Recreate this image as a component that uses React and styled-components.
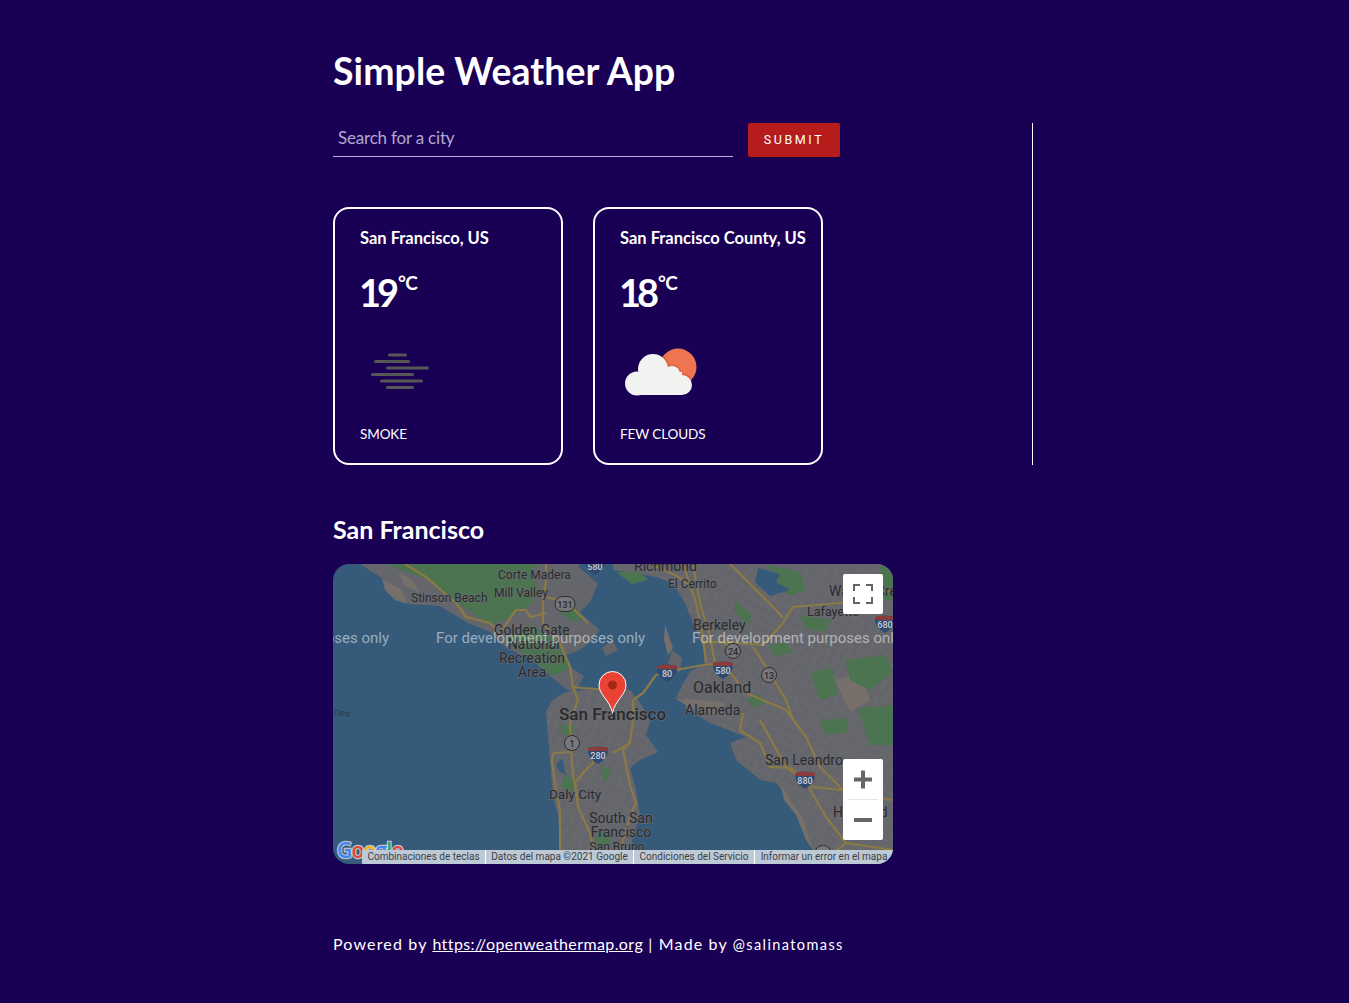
import React from 'react';
import styled, { createGlobalStyle } from 'styled-components';

const GlobalStyle = createGlobalStyle`
   html, body {
      margin: 0;
      padding: 0;
      background: #1a0055;
   }
   body {
      color: #fff;
      font-family: 'Lato', 'Open Sans', sans-serif;
   }
`;

const Page = styled.div`
   box-sizing: border-box;
   height: 1003px;
   overflow: hidden;
   padding: 47px 0 0 333px;
`;

const Title = styled.h1`
   margin: 0 0 28px;
   height: 48px;
   font-size: 37.4px;
   line-height: 48px;
   font-weight: 700;
   letter-spacing: 0.1px;
`;

const Search = styled.section`
   box-sizing: border-box;
   width: 700px;
   height: 342px;
   border-right: 1px solid #fff;
`;

const Form = styled.form`
   display: flex;
   align-items: flex-start;
   gap: 15px;
   margin-bottom: 50px;
`;

const CityInput = styled.input`
   box-sizing: border-box;
   width: 400px;
   height: 34px;
   padding: 0 5px 4px;
   background: transparent;
   border: 0;
   border-bottom: 1px solid #b9b2d2;
   outline: none;
   color: #fff;
   font-family: inherit;
   font-size: 17px;
   letter-spacing: -0.2px;

   &::placeholder {
      color: #b3a9d0;
      opacity: 1;
   }
`;

const Submit = styled.button`
   width: 92px;
   height: 34px;
   padding: 0 0 2px;
   background: #b71c1c;
   border: 0;
   border-radius: 2px;
   color: #fff;
   font-family: 'Roboto', sans-serif;
   font-size: 12.5px;
   font-weight: 400;
   letter-spacing: 2.6px;
   box-shadow: 0 1px 2px rgba(0, 0, 0, 0.3);
`;

const Cards = styled.div`
   display: flex;
   gap: 30px;
`;

const Card = styled.article`
   box-sizing: border-box;
   width: 230px;
   height: 258px;
   padding: 19px 0 0 25px;
   border: 2px solid #fff;
   border-radius: 16px;
`;

const City = styled.h3`
   margin: 0;
   height: 20px;
   font-size: 16.5px;
   line-height: 20px;
   font-weight: 700;
   white-space: nowrap;
`;

const Temperature = styled.div`
   display: flex;
   align-items: flex-start;
   height: 38px;
   margin: 25px 0 21px -1px;
   font-size: 38px;
   line-height: 38px;
   font-weight: 700;
   letter-spacing: -4px;
`;

const Unit = styled.span`
   margin-left: 3px;
   font-size: 19px;
   line-height: 20px;
   font-weight: 700;
   letter-spacing: -0.8px;
`;

const WeatherIcon = styled.svg`
   display: block;
   width: 80px;
   height: 80px;
`;

const Description = styled.p`
   margin: 13px 0 0;
   font-size: 13.5px;
   line-height: 18px;
   letter-spacing: -0.1px;
`;

const CityHeading = styled.h2`
   margin: 49px 0 20px;
   height: 30px;
   font-size: 25px;
   line-height: 30px;
   font-weight: 700;
`;

const MapFrame = styled.div`
   position: relative;
   width: 560px;
   height: 300px;
   border-radius: 16px;
   overflow: hidden;
`;

const MapDrawing = styled.svg`
   display: block;
   width: 560px;
   height: 300px;
   background: #355a7a;
`;

const Land = styled.path`
   fill: ${({ $tan }) => ($tan ? '#77706a' : '#65666b')};
`;

const Park = styled.path`
   fill: #4c7450;
`;

const Water = styled.path`
   fill: #355a7a;
`;

const Road = styled.polyline`
   fill: none;
   stroke: #8b7a45;
   stroke-width: 2.2px;
   stroke-linejoin: round;
`;

const Place = styled.text`
   font-family: 'Roboto', sans-serif;
   font-size: ${({ $size }) => $size}px;
   font-weight: ${({ $weight }) => $weight || 400};
   fill: #29292e;
   stroke: #6d6e72;
   stroke-width: 1.6px;
   stroke-opacity: 0.7;
   paint-order: stroke;
   text-anchor: ${({ $middle }) => ($middle ? 'middle' : 'start')};
`;

const Watermark = styled.text`
   font-family: 'Roboto', sans-serif;
   font-size: 15px;
   fill: rgba(255, 255, 255, 0.5);
`;

const ShieldLabel = styled.text`
   font-family: 'Roboto', sans-serif;
   font-size: ${({ $size }) => $size || 9}px;
   font-weight: 500;
   text-anchor: middle;
   fill: ${({ $dark }) => ($dark ? '#2a2a2e' : '#c9ced6')};
`;

const LogoLetter = styled.tspan`
   fill: ${({ $color }) => $color};
`;

const Logo = styled.text`
   font-family: 'Open Sans', sans-serif;
   font-size: 21px;
   font-weight: 600;
   letter-spacing: -0.8px;
   stroke: rgba(255, 255, 255, 0.65);
   stroke-width: 2.5px;
   paint-order: stroke;
`;

const MapButton = styled.div`
   position: absolute;
   right: 10px;
   top: ${({ $top }) => $top}px;
   width: 40px;
   height: ${({ $tall }) => ($tall ? 81 : 40)}px;
   background: #fff;
   border-radius: 2px;
`;

const ButtonIcon = styled.svg`
   display: block;
   width: 40px;
   height: ${({ $tall }) => ($tall ? 81 : 40)}px;
`;

const Attribution = styled.div`
   position: absolute;
   right: 0;
   bottom: 0;
   display: flex;
   height: 14px;
   background: #bdc9d5;
   font-family: 'Roboto', sans-serif;
   font-size: 10px;
   line-height: 14px;
   color: #3c4046;
`;

const AttributionItem = styled.span`
   box-sizing: border-box;
   width: ${({ $width }) => $width}px;
   text-align: center;
   white-space: nowrap;
   & + & {
      border-left: 1px solid #fff;
   }
`;

const Footer = styled.footer`
   margin-top: 69px;
   font-size: 16px;
   line-height: 22px;
   letter-spacing: 1.15px;
   white-space: nowrap;
`;

const FooterLink = styled.a`
   color: #fff;
   text-decoration: underline;
   letter-spacing: 0.4px;
`;

const Handle = styled.span`
   font-size: 14.5px;
   letter-spacing: 1.4px;
`;

const LAND = [
   'M360 564 L382 578 L402 590 L408 604 L440 606 L466 622 L490 632 L506 648 L532 660 L552 678 L568 690 L574 694 L584 676 L572 668 L566 655 L580 650 L590 642 L600 630 L590 622 L580 612 L590 602 L598 584 L578 566 L582 564 Z',
   'M546 712 L552 700 L566 692 L584 690 L610 686 L630 690 L640 702 L650 722 L646 735 L658 752 L640 760 L630 768 L636 790 L640 815 L632 840 L625 864 L560 864 L560 840 L558 815 L553 797 L550 760 Z',
   'M613 564 L613 570 L640 574 L656 577 L673 583 L685 603 L693 623 L703 647 L705 663 L690 672 L676 697 L690 700 L685 708 L710 723 L746 737 L730 743 L736 760 L760 780 L776 783 L790 800 L803 817 L813 850 L820 864 L893 864 L893 564 Z',
];

const TAN = [
   'M382 578 L402 590 L408 604 L395 600 L385 590 Z',
   'M398 572 L412 580 L420 592 L405 586 Z',
   'M780 783 L790 800 L803 817 L813 850 L806 840 L796 815 L784 800 Z',
   'M835 680 L860 672 L870 700 L850 712 Z',
   'M665 625 L673 648 L668 655 L664 640 Z',
];

const PARKS = [
   'M385 564 L430 580 L462 606 L490 625 L510 618 L530 605 L540 590 L530 575 L540 564 Z',
   'M504 640 L530 625 L556 640 L570 668 L552 676 L530 658 Z',
   'M556 608 L575 608 L584 618 L575 622 L562 615 Z',
   'M616 572 L640 572 L648 580 L632 584 Z',
   'M880 566 L893 566 L893 600 L884 600 Z',
   'M800 615 L830 620 L826 632 L805 628 Z',
   'M768 565 L800 572 L806 590 L790 596 L776 585 Z',
   'M768 645 L785 642 L792 652 L775 656 Z',
   'M735 600 L752 615 L748 625 L735 612 Z',
   'M845 660 L885 655 L893 672 L870 690 L850 680 Z',
   'M810 672 L832 668 L838 695 L820 700 Z',
   'M820 720 L846 718 L848 732 L825 735 Z',
   'M858 708 L893 705 L893 745 L870 745 Z',
   'M845 770 L870 760 L880 790 L855 800 Z',
   'M560 725 L575 725 L572 735 L562 734 Z',
   'M565 775 L576 782 L570 796 L561 786 Z',
   'M600 765 L612 772 L605 783 Z',
   'M746 700 L760 694 L766 702 L755 708 Z',
   'M595 835 L605 830 L612 845 L598 850 Z',
];

const HIGHWAYS = [
   '405,564 426,577 456,603 466,617 490,623 500,633',
   '500,633 516,610 526,610 530,617 546,613',
   '546,564 546,580 543,603 543,623 560,643 570,667 573,687 583,688 612,690',
   '546,597 566,602 588,623',
   '573,687 578,700 570,723 571,750 573,775 578,800',
   '553,753 571,752',
   '553,753 552,762 556,790 560,810 560,850',
   '593,750 593,763 583,773 575,783 578,807 590,833 597,864',
   '633,700 633,720 630,743 623,750 630,785 636,803 630,817 620,850',
   '633,700 643,693 656,675 676,670 703,665 723,663',
   '613,753 630,743',
   '683,564 696,603 703,637 706,663',
   '693,564 700,603 710,637 715,663',
   '723,642 763,645 783,623 793,607 840,603 880,593 893,590',
   '703,642 723,642 735,650',
   '753,647 770,673 786,700 793,720',
   '726,667 746,693 786,710 806,737 820,767 846,793 893,800',
   '743,713 740,730 760,743 770,767 790,768 803,777 826,817 846,843 893,850',
   '760,720 786,767 813,787 843,790',
   '730,564 746,580 776,610 783,618',
   '820,864 846,843',
   '650,564 675,575 690,585',
];

const PLACES = [
   { x: 634, y: 571, size: 14, text: 'Richmond' },
   { x: 498, y: 579, size: 12, text: 'Corte Madera' },
   { x: 668, y: 588, size: 12, text: 'El Cerrito' },
   { x: 411, y: 602, size: 12, text: 'Stinson Beach' },
   { x: 494, y: 597, size: 12, text: 'Mill Valley' },
   { x: 494, y: 635, size: 13.8, text: 'Golden Gate' },
   { x: 508, y: 649, size: 13.8, text: 'National' },
   { x: 499, y: 663, size: 13.8, text: 'Recreation' },
   { x: 518, y: 677, size: 13.8, text: 'Area' },
   { x: 693, y: 630, size: 14, text: 'Berkeley' },
   { x: 693, y: 693, size: 16, text: 'Oakland' },
   { x: 685, y: 715, size: 14, text: 'Alameda' },
   { x: 559, y: 720, size: 17, weight: 500, text: 'San Francisco' },
   { x: 549, y: 799, size: 13.5, text: 'Daly City' },
   { x: 621, y: 823, size: 14, middle: true, text: 'South San' },
   { x: 621, y: 837, size: 14, middle: true, text: 'Francisco' },
   { x: 617, y: 851, size: 12, middle: true, text: 'San Bruno' },
   { x: 765, y: 765, size: 14, text: 'San Leandro' },
   { x: 807, y: 616, size: 12.5, text: 'Lafayette' },
   { x: 829, y: 596, size: 14, text: 'Walnut Creek' },
   { x: 833, y: 817, size: 14, text: 'Hayward' },
];

const INTERSTATES = [
   { x: 595, y: 566, text: '580' },
   { x: 667, y: 673, text: '80' },
   { x: 723, y: 670, text: '580' },
   { x: 598, y: 755, text: '280' },
   { x: 805, y: 780, text: '880' },
   { x: 885, y: 624, text: '680' },
];

const ROUTES = [
   { x: 565, y: 604, w: 20, text: '131' },
   { x: 733, y: 651, w: 15, text: '24' },
   { x: 769, y: 675, w: 15, text: '13' },
   { x: 572, y: 743, w: 15, text: '1' },
   { x: 823, y: 853, w: 16, text: '92' },
];

const Interstate = ({ x, y, text }) => (
   <g transform={`translate(${x} ${y})`}>
      <path d='M-10 -7 Q0 -10 10 -7 Q11 3 0 9 Q-11 3 -10 -7 Z' fill='#2f4a6e' />
      <path d='M-10 -7 Q0 -10 10 -7 L10 -4 L-10 -4 Z' fill='#8c3b3b' />
      <ShieldLabel x={0} y={4}>
         {text}
      </ShieldLabel>
   </g>
);

const Route = ({ x, y, w, text }) => (
   <g>
      <rect
         x={x - w / 2}
         y={y - 7.5}
         width={w}
         height={15}
         rx={7.5}
         fill='#77787c'
         stroke='#2c2c30'
      />
      <ShieldLabel $dark x={x} y={y + 3.5}>
         {text}
      </ShieldLabel>
   </g>
);

const CityMap = () => (
   <MapFrame>
      <MapDrawing viewBox='333 564 560 300'>
         <defs>
            <pattern
               id='streets'
               width='9'
               height='9'
               patternUnits='userSpaceOnUse'
               patternTransform='rotate(25)'
            >
               <path d='M0 0H9M0 0V9' stroke='#737478' strokeWidth='0.6' />
            </pattern>
         </defs>

         {LAND.map((d) => (
            <Land key={d} d={d} />
         ))}
         {LAND.slice(1).map((d) => (
            <path key={d} d={d} fill='url(#streets)' />
         ))}
         {TAN.map((d) => (
            <Land key={d} d={d} $tan />
         ))}
         {PARKS.map((d) => (
            <Park key={d} d={d} />
         ))}
         <Land d='M672 650 L682 658 L680 672 L668 664 Z' />
         <Land d='M675 698 L725 702 L722 716 L690 708 Z' $tan />
         <Land d='M602 648 L612 640 L618 650 L606 656 Z' />
         <Water d='M758 568 L780 574 L776 582 L790 590 L770 596 L755 582 Z' />
         <Water d='M556 765 L562 758 L566 775 L560 772 Z' />

         {HIGHWAYS.map((points) => (
            <Road key={points} points={points} />
         ))}

         {INTERSTATES.map((shield) => (
            <Interstate key={shield.text + shield.x} {...shield} />
         ))}
         {ROUTES.map((shield) => (
            <Route key={shield.text} {...shield} />
         ))}

         {PLACES.map(({ x, y, size, weight, middle, text }) => (
            <Place key={text} x={x} y={y} $size={size} $weight={weight} $middle={middle}>
               {text}
            </Place>
         ))}
         <ShieldLabel $dark $size={10} x={342} y={716} transform='rotate(10 342 716)' opacity='0.5'>
            nes
         </ShieldLabel>

         {[180, 436, 692].map((x) => (
            <Watermark key={x} x={x} y={643}>
               For development purposes only
            </Watermark>
         ))}

         {/* pin */}
         <path
            d='M612.5 713 C610 700 599 695 599 685 A13.5 13.5 0 0 1 626 685 C626 695 615 700 612.5 713 Z'
            fill='#ea4335'
            stroke='#fff'
            strokeWidth='1'
         />
         <circle cx='612.5' cy='685' r='4.5' fill='#a52714' />

         <Logo x={337} y={858}>
            <LogoLetter $color='#4285f4'>G</LogoLetter>
            <LogoLetter $color='#ea4335'>o</LogoLetter>
            <LogoLetter $color='#fbbc05'>o</LogoLetter>
            <LogoLetter $color='#4285f4'>g</LogoLetter>
            <LogoLetter $color='#34a853'>l</LogoLetter>
            <LogoLetter $color='#ea4335'>e</LogoLetter>
         </Logo>
      </MapDrawing>

      <MapButton $top={10}>
         <ButtonIcon viewBox='0 0 40 40'>
            <path
               d='M11 17V11H17M23 11H29V17M29 23V29H23M17 29H11V23'
               fill='none'
               stroke='#666'
               strokeWidth='2'
            />
         </ButtonIcon>
      </MapButton>
      <MapButton $top={195} $tall>
         <ButtonIcon $tall viewBox='0 0 40 81'>
            <path d='M11 20.5H29M20 11.5V29.5' fill='none' stroke='#666' strokeWidth='4' />
            <path d='M5 40.5H35' stroke='#e6e6e6' strokeWidth='1' />
            <path d='M11 61H29' stroke='#666' strokeWidth='4' />
         </ButtonIcon>
      </MapButton>

      <Attribution>
         <AttributionItem $width={123}>Combinaciones de teclas</AttributionItem>
         <AttributionItem $width={148}>Datos del mapa ©2021 Google</AttributionItem>
         <AttributionItem $width={121}>Condiciones del Servicio</AttributionItem>
         <AttributionItem $width={139}>Informar un error en el mapa</AttributionItem>
      </Attribution>
   </MapFrame>
);

const SmokeIcon = () => (
   <WeatherIcon viewBox='360 332 80 80'>
      {[
         [388, 355, 19],
         [374, 361.5, 36],
         [386, 368, 43],
         [371, 374.5, 43],
         [380, 381, 43],
         [386, 387.5, 28],
      ].map(([x, y, width]) => (
         <rect key={y} x={x} y={y - 1.5} width={width} height={3} rx={1.5} fill='#575757' />
      ))}
   </WeatherIcon>
);

const CLOUD_PUFFS = [
   [653, 369, 15],
   [672, 374, 8],
   [682, 385, 10],
   [637, 383.5, 12],
];

const CloudIcon = () => (
   <WeatherIcon viewBox='620 332 80 80'>
      <defs>
         <clipPath id='sun'>
            <circle cx='678' cy='367' r='18.5' />
         </clipPath>
      </defs>
      <circle cx='678' cy='367' r='18.5' fill='#ee7550' />
      <g clipPath='url(#sun)' fill='#d8623f'>
         {CLOUD_PUFFS.map(([cx, cy, r]) => (
            <circle key={cx} cx={cx} cy={cy} r={r + 1.5} />
         ))}
      </g>
      <g fill='#f2f2f0'>
         {CLOUD_PUFFS.map(([cx, cy, r]) => (
            <circle key={cx} cx={cx} cy={cy} r={r} />
         ))}
         <rect x='637' y='372' width='45' height='23' />
      </g>
   </WeatherIcon>
);

const WeatherCard = ({ city, temperature, description, icon }) => (
   <Card>
      <City>{city}</City>
      <Temperature>
         {temperature}
         <Unit>°C</Unit>
      </Temperature>
      {icon}
      <Description>{description}</Description>
   </Card>
);

const App = () => (
   <Page>
      <GlobalStyle />
      <Title>Simple Weather App</Title>
      <Search>
         <Form onSubmit={(e) => e.preventDefault()}>
            <CityInput placeholder='Search for a city' />
            <Submit type='submit'>SUBMIT</Submit>
         </Form>
         <Cards>
            <WeatherCard
               city='San Francisco, US'
               temperature='19'
               description='SMOKE'
               icon={<SmokeIcon />}
            />
            <WeatherCard
               city='San Francisco County, US'
               temperature='18'
               description='FEW CLOUDS'
               icon={<CloudIcon />}
            />
         </Cards>
      </Search>
      <CityHeading>San Francisco</CityHeading>
      <CityMap />
      <Footer>
         Powered by <FooterLink href='#'>https://openweathermap.org</FooterLink> | Made by{' '}
         <Handle>@salinatomass</Handle>
      </Footer>
   </Page>
);

export default App;
